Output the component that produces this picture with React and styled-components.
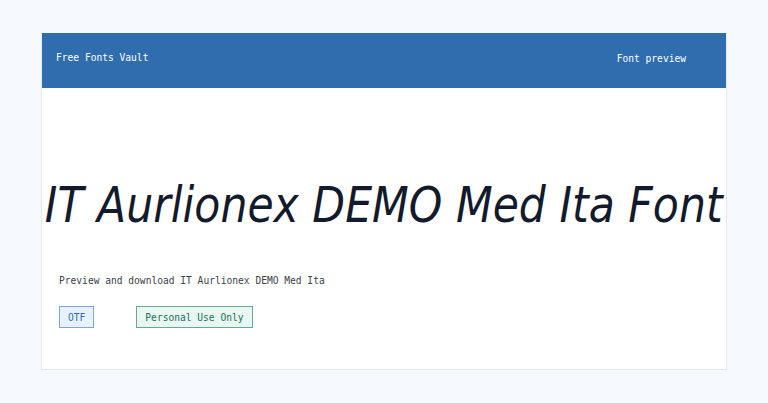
import React from "react";
import styled, { createGlobalStyle } from "styled-components";

const GlobalStyle = createGlobalStyle`
  html, body {
    margin: 0;
    padding: 0;
    background: #f6f9fe;
  }
  body {
    font-family: "DejaVu Sans Mono", "Liberation Mono", monospace;
  }
`;

const Page = styled.div`
  padding: 33px 41px;
  box-sizing: border-box;
  width: 768px;
  height: 403px;
`;

const Card = styled.main`
  background: #fff;
  border: 1px solid #e3e9f2;
  border-top: none;
  height: 337px;
  box-sizing: border-box;
  display: flex;
  flex-direction: column;
  overflow: hidden;
`;

const Header = styled.header`
  background: #2f6dae;
  height: 55px;
  display: flex;
  justify-content: space-between;
  align-items: center;
  padding: 0 40px 0 14px;
  color: #fff;
  font-size: 9.6px;
`;

const Brand = styled.div`
  margin-top: -7px;
`;

const NavLink = styled.div`
  margin-top: -5px;
`;

const Body = styled.section`
  flex: 1;
  display: flex;
  flex-direction: column;
  padding: 0 17px;
`;

const Title = styled.h1`
  margin: 87px -17px 0;
  display: flex;
  justify-content: center;
  font-family: "DejaVu Sans", sans-serif;
  font-style: italic;
  font-weight: normal;
  font-size: 50px;
  line-height: 60px;
  color: #121a2b;
  white-space: nowrap;
`;

/* the preview face is narrower than DejaVu, so squeeze it horizontally */
const TitleText = styled.span`
  display: inline-block;
  flex-shrink: 0;
  transform: scaleX(0.852);
  transform-origin: center;
`;

const Lead = styled.p`
  margin: 40px 0 0;
  font-size: 9.6px;
  color: #3a3f47;
`;

const Tags = styled.div`
  display: flex;
  gap: 42px;
  margin-top: 20px;
`;

const Tag = styled.span`
  display: inline-flex;
  align-items: center;
  height: 22px;
  padding: 0 8px;
  box-sizing: border-box;
  font-size: 9.6px;
  border: 1px solid ${(p) => p.$border};
  background: ${(p) => p.$bg};
  color: ${(p) => p.$color};
`;

export default function App() {
  return (
    <>
      <GlobalStyle />
      <Page>
        <Card>
          <Header>
            <Brand>Free Fonts Vault</Brand>
            <NavLink>Font preview</NavLink>
          </Header>
          <Body>
            <Title>
              <TitleText>IT Aurlionex DEMO Med Ita Font</TitleText>
            </Title>
            <Lead>Preview and download IT Aurlionex DEMO Med Ita</Lead>
            <Tags>
              <Tag $bg="#e8f1fd" $border="#7fa6d8" $color="#2f6dae">
                OTF
              </Tag>
              <Tag $bg="#e8f7f2" $border="#67a795" $color="#1b6f5c">
                Personal Use Only
              </Tag>
            </Tags>
          </Body>
        </Card>
      </Page>
    </>
  );
}
